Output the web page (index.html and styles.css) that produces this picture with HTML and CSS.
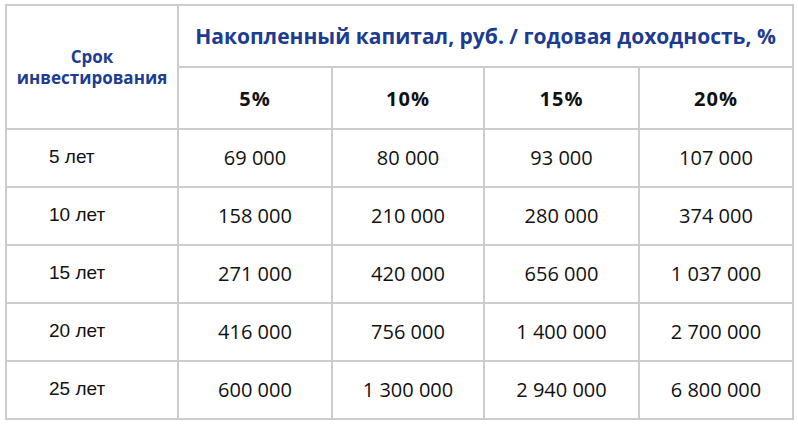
FILE: index.html
```html
<!DOCTYPE html>
<html lang="ru">
<head>
<meta charset="utf-8">
<link rel="stylesheet" href="styles.css">
</head>
<body>
<table class="grid">
  <colgroup>
    <col class="c-term">
    <col class="c-a">
    <col class="c-b">
    <col class="c-c">
    <col class="c-d">
  </colgroup>
  <thead>
    <tr class="h1">
      <th class="term-head" rowspan="2">Срок<br>инвестирования</th>
      <th class="cap-head" colspan="4">Накопленный капитал, руб. / годовая доходность, %</th>
    </tr>
    <tr class="h2">
      <th class="rate">5%</th>
      <th class="rate">10%</th>
      <th class="rate">15%</th>
      <th class="rate">20%</th>
    </tr>
  </thead>
  <tbody>
    <tr><td class="term">5 лет</td><td>69 000</td><td>80 000</td><td>93 000</td><td>107 000</td></tr>
    <tr><td class="term">10 лет</td><td>158 000</td><td>210 000</td><td>280 000</td><td>374 000</td></tr>
    <tr><td class="term">15 лет</td><td>271 000</td><td>420 000</td><td>656 000</td><td>1 037 000</td></tr>
    <tr><td class="term">20 лет</td><td>416 000</td><td>756 000</td><td>1 400 000</td><td>2 700 000</td></tr>
    <tr><td class="term">25 лет</td><td>600 000</td><td>1 300 000</td><td>2 940 000</td><td>6 800 000</td></tr>
  </tbody>
</table>
</body>
</html>
```
FILE: styles.css
```css
html, body {
  margin: 0;
  padding: 0;
  background: #ffffff;
}
body {
  padding: 4px 0 0 5px;
  font-family: "Open Sans", "Liberation Sans", sans-serif;
  color: #111111;
}
.grid {
  border-collapse: collapse;
  table-layout: fixed;
  width: 787px;
  border: 2px solid #cccccc;
}
.c-term { width: 172px; }
.c-a { width: 154px; }
.c-b { width: 152px; }
.c-c { width: 155px; }
.c-d { width: 154px; }
.grid th, .grid td {
  border: 2px solid #cccccc;
  padding: 0;
  text-align: center;
  vertical-align: middle;
}
.h1 { height: 62px; }
.h2 { height: 62px; }
.grid tbody tr { height: 58px; }
.term-head {
  color: #1d3c91;
  font-weight: 700;
  font-size: 17px;
  line-height: 21px;
  padding-top: 3px;
}
.cap-head {
  color: #1d3c91;
  font-weight: 700;
  font-size: 21px;
  padding-bottom: 2px;
}
.rate {
  color: #111111;
  font-weight: 700;
  font-size: 20px;
  letter-spacing: 1px;
  padding-bottom: 6px;
}
.grid td {
  font-size: 20px;
  padding-bottom: 2px;
}
.grid td.term {
  text-align: left;
  padding-left: 42px;
  font-family: "Liberation Sans", sans-serif;
  font-size: 19px;
}
```
